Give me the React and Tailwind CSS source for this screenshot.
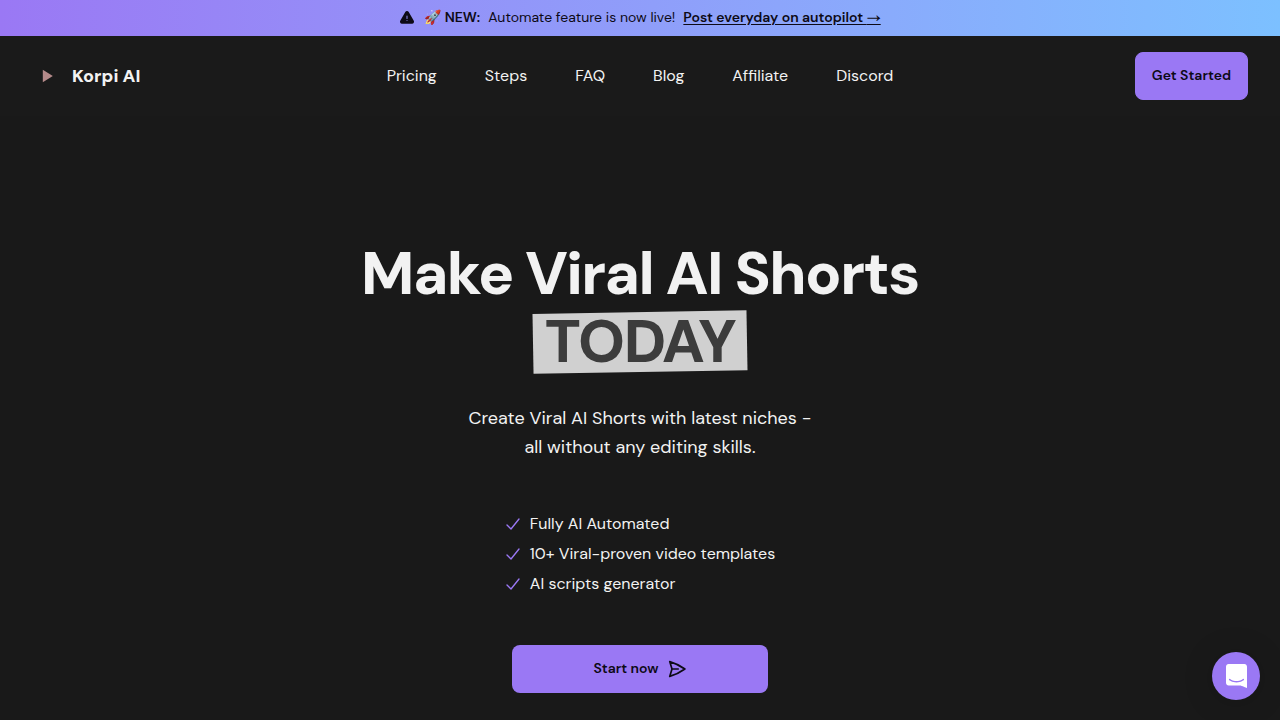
import React from "react";

const links = ["Pricing", "Steps", "FAQ", "Blog", "Affiliate", "Discord"];

const features = [
  "Fully AI Automated",
  "10+ Viral-proven video templates",
  "AI scripts generator",
];

function WarningIcon() {
  return (
    <svg viewBox="0 0 24 24" className="size-4 shrink-0" aria-hidden="true">
      <path
        fill="currentColor"
        fillRule="evenodd"
        d="M9.4 3a3 3 0 0 1 5.2 0l7.36 12.75A3 3 0 0 1 19.36 20.5H4.64a3 3 0 0 1-2.6-4.75L9.4 3ZM12 8.25a.75.75 0 0 1 .75.75v3.75a.75.75 0 0 1-1.5 0V9a.75.75 0 0 1 .75-.75Zm0 8.25a.75.75 0 1 0 0-1.5.75.75 0 0 0 0 1.5Z"
      />
    </svg>
  );
}

function CheckIcon() {
  return (
    <svg viewBox="0 0 24 24" fill="none" stroke="currentColor" strokeWidth="2" strokeLinecap="round" strokeLinejoin="round" className="size-4 shrink-0 text-[#9a78f4]" aria-hidden="true">
      <path d="M3 13.5 9 19.5 21 4.5" />
    </svg>
  );
}

function SendIcon() {
  return (
    <svg viewBox="0 0 24 24" fill="none" stroke="currentColor" strokeWidth="2" strokeLinecap="round" strokeLinejoin="round" className="size-5 shrink-0" aria-hidden="true">
      <path d="M6 12 3.269 3.125A59.769 59.769 0 0 1 21.485 12 59.768 59.768 0 0 1 3.27 20.875L5.999 12Zm0 0h7.5" />
    </svg>
  );
}

function ChatIcon() {
  return (
    <svg viewBox="0 0 28 32" className="h-6" aria-hidden="true">
      <path
        fill="#ffffff"
        d="M28 32s-4.714-1.855-8.527-3.34H3.437C1.54 28.66 0 27.026 0 25.013V3.644C0 1.633 1.54 0 3.437 0h21.125c1.898 0 3.437 1.632 3.437 3.645v18.404H28V32Zm-4.139-11.982a.88.88 0 0 0-1.292-.105c-.03.026-3.015 2.681-8.57 2.681-5.486 0-8.517-2.636-8.571-2.684a.88.88 0 0 0-1.29.107 1.01 1.01 0 0 0-.219.708.992.992 0 0 0 .318.664c.142.128 3.537 3.15 9.762 3.15 6.226 0 9.621-3.022 9.763-3.15a.992.992 0 0 0 .317-.664 1.01 1.01 0 0 0-.218-.707Z"
      />
    </svg>
  );
}

export default function App() {
  return (
    <div className="min-h-screen bg-[#191919] font-['DM_Sans','Inter',sans-serif] text-[#f2f2f2]">
      <div className="flex h-9 items-center justify-center gap-[9px] bg-linear-to-r from-[#9a78f4] to-[#7cc0ff] text-sm text-[#0d0a16]">
        <WarningIcon />
        <p className="flex items-center gap-2 pb-0.5">
          <strong className="font-semibold">🚀 NEW:</strong>
          <span>Automate feature is now live!</span>
          <a href="#autopilot" className="font-semibold underline underline-offset-2">
            Post everyday on autopilot <span className="font-['Noto_Sans_Math','Noto_Sans_CJK_SC',sans-serif] leading-none">→</span>
          </a>
        </p>
      </div>

      <header className="grid h-20 grid-cols-[1fr_auto_1fr] items-center bg-[#1a1a1a] px-8">
        <a href="#home" className="flex items-center gap-2 justify-self-start">
          <svg viewBox="0 0 32 32" className="size-8" aria-hidden="true">
            <path d="M10.8 9.7v12.6L20.8 16z" fill="#b58a8a" />
          </svg>
          <span className="text-lg font-extrabold">Korpi AI</span>
        </a>
        <nav className="flex items-center gap-12 text-base">
          {links.map((label) => (
            <a key={label} href={"#" + label.toLowerCase()}>
              {label}
            </a>
          ))}
        </nav>
        <button type="button" className="h-12 justify-self-end rounded-lg border border-[#9a78f4] bg-[#9a78f4] px-4 pb-0.5 text-sm font-semibold text-[#0d0a16]">
          Get Started
        </button>
      </header>

      <main className="flex flex-col items-center px-8 pt-[124px] pb-7 text-center">
        <h1 className="text-[60px] leading-[68px] font-extrabold tracking-tight">
          Make Viral AI Shorts
          <span className="relative isolate mx-auto block w-fit px-3 text-[#3c3c3c]">
            <span className="absolute inset-x-0 inset-y-1 -z-10 -rotate-1 bg-[#d0d0d0]" />
            TODAY
          </span>
        </h1>
        <p className="mt-7 text-lg leading-[29px]">
          Create Viral AI Shorts with latest niches -
          <br />
          all without any editing skills.
        </p>
        <ul className="mt-[50px] flex flex-col gap-1.5 text-base leading-6">
          {features.map((feature) => (
            <li key={feature} className="flex items-center gap-[9px]">
              <CheckIcon />
              {feature}
            </li>
          ))}
        </ul>
        <button type="button" className="mt-[49px] flex h-12 w-64 items-center justify-center gap-2 rounded-lg bg-[#9a78f4] text-sm font-semibold text-[#0d0a16]">
          <span className="pb-0.5">Start now</span>
          <SendIcon />
        </button>
      </main>

      <button type="button" aria-label="Open chat" className="fixed right-5 bottom-5 flex size-12 items-center justify-center rounded-full bg-[#9a78f4] shadow-[0_2px_32px_rgba(0,0,0,0.16)]">
        <ChatIcon />
      </button>
    </div>
  );
}
